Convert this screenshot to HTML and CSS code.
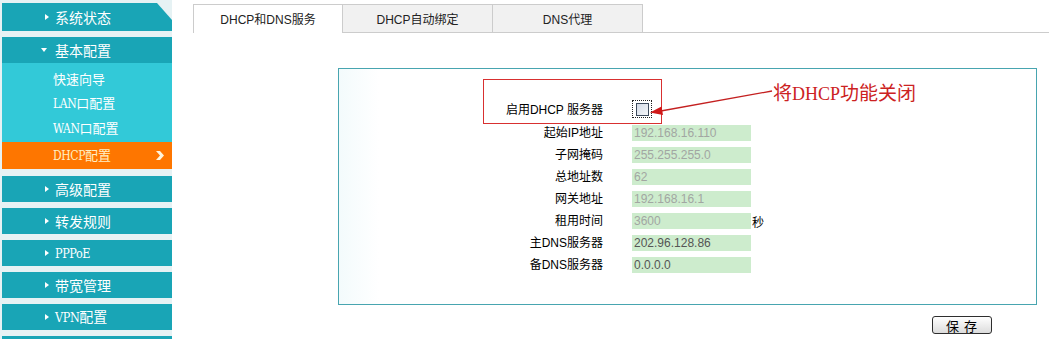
FILE: index.html
```html
<!DOCTYPE html>
<html lang="zh-CN">
<head>
<meta charset="utf-8">
<title>DHCP配置</title>
<link rel="stylesheet" href="styles.css">
</head>
<body>
<div class="page">
  <nav class="sidebar">
    <div class="nav-item first"><span class="tri-r"></span><span class="txt">系统状态</span></div>
    <div class="nav-item open"><span class="tri-d"></span><span class="txt">基本配置</span></div>
    <div class="submenu">
      <div class="sub-item"><span class="txt">快速向导</span></div>
      <div class="sub-item"><span class="txt"><span class="lat">LAN</span>口配置</span></div>
      <div class="sub-item"><span class="txt"><span class="lat">WAN</span>口配置</span></div>
    </div>
    <div class="sub-item active"><span class="txt"><span class="lat">DHCP</span>配置</span>
      <svg class="chev" width="11" height="11" viewBox="0 0 11 11"><path d="M2 1 L6 1 L10 5.5 L6 10 L2 10 L6 5.5 Z" fill="#fff4dc"/></svg>
    </div>
    <div class="nav-item gap7"><span class="tri-r"></span><span class="txt">高级配置</span></div>
    <div class="nav-item"><span class="tri-r"></span><span class="txt">转发规则</span></div>
    <div class="nav-item"><span class="tri-r"></span><span class="txt"><span class="lat big">PPPoE</span></span></div>
    <div class="nav-item"><span class="tri-r"></span><span class="txt">带宽管理</span></div>
    <div class="nav-item"><span class="tri-r"></span><span class="txt"><span class="lat big">VPN</span>配置</span></div>
    <div class="nav-item"></div>
  </nav>

  <main class="main">
    <div class="tabbar">
      <div class="tab active">DHCP和DNS服务</div>
      <div class="tab">DHCP自动绑定</div>
      <div class="tab">DNS代理</div>
      <div class="tab-fill"></div>
    </div>

    <section class="panel">
      <div class="note-box"></div>
      <div class="row enable">
        <label class="lbl">启用DHCP 服务器</label>
        <span class="focus"><span class="check"></span></span>
      </div>
      <div class="row"><label class="lbl">起始IP地址</label><span class="field dis">192.168.16.110</span></div>
      <div class="row"><label class="lbl">子网掩码</label><span class="field dis">255.255.255.0</span></div>
      <div class="row"><label class="lbl">总地址数</label><span class="field dis">62</span></div>
      <div class="row"><label class="lbl">网关地址</label><span class="field dis">192.168.16.1</span></div>
      <div class="row"><label class="lbl">租用时间</label><span class="field dis">3600</span><span class="unit">秒</span></div>
      <div class="row"><label class="lbl">主DNS服务器</label><span class="field">202.96.128.86</span></div>
      <div class="row"><label class="lbl">备DNS服务器</label><span class="field">0.0.0.0</span></div>
    </section>

    <div class="actions"><button class="btn">保 存</button></div>
  </main>

  <svg class="arrow" width="140" height="60" viewBox="0 0 140 60">
    <line x1="132" y1="21" x2="18" y2="41.5" stroke="#c42020" stroke-width="1.3"/>
    <polygon points="10,42.5 21.5,36.5 23,45" fill="#d01818"/>
  </svg>
  <div class="note-text">将<span class="serif">DHCP</span>功能关闭</div>
</div>
</body>
</html>
```

FILE: styles.css
```css
html, body {
  margin: 0;
  padding: 0;
  height: 339px;
  overflow: hidden;
  background: #ffffff;
}

.page {
  position: relative;
  display: flex;
  width: 1049px;
  height: 339px;
  overflow: hidden;
  font-family: "Liberation Sans", "Noto Sans CJK SC", sans-serif;
}

/* ---------- sidebar ---------- */
.sidebar {
  width: 172px;
  flex: none;
  background: #e6f2f4;
  padding-top: 3px;
  display: flex;
  flex-direction: column;
}

.txt {
  white-space: nowrap;
}

.nav-item {
  margin-left: 2px;
  height: 26px;
  margin-bottom: 6px;
  background: #19a5b6;
  color: #ffffff;
  font-size: 14px;
  line-height: 26px;
  display: flex;
  align-items: center;
  padding-left: 41px;
  box-sizing: border-box;
  font-family: "Noto Sans CJK SC", sans-serif;
  flex: none;
}

.nav-item.first {
  height: 28px;
  clip-path: polygon(0 0, 155px 0, 170px 17px, 170px 100%, 0 100%);
}

.nav-item.open {
  margin-bottom: 0;
  padding-left: 37px;
}

.nav-item.gap7 {
  margin-top: 7px;
}

.tri-r {
  width: 0;
  height: 0;
  border-top: 3px solid transparent;
  border-bottom: 3px solid transparent;
  border-left: 4px solid #ffffff;
  margin-right: 6px;
  margin-left: 2px;
}

.tri-d {
  width: 0;
  height: 0;
  border-left: 3.5px solid transparent;
  border-right: 3.5px solid transparent;
  border-top: 4px solid #ffffff;
  margin-right: 8px;
  margin-left: 2px;
}

.submenu {
  margin-left: 2px;
  background: #32c9d8;
  padding-top: 3px;
  padding-bottom: 1px;
}

.sub-item {
  height: 25px;
  line-height: 25px;
  padding-left: 51px;
  color: #ffffff;
  font-size: 13px;
  font-family: "Noto Sans CJK SC", sans-serif;
  display: flex;
  align-items: center;
}

.sub-item.active {
  margin-left: 2px;
  height: 27px;
  background: #fe7600;
  color: #fff0c4;
  position: relative;
}

.chev {
  position: absolute;
  left: 152px;
  top: 8px;
}

.lat {
  font-family: "DejaVu Serif", serif;
  font-stretch: condensed;
  font-size: 12px;
  letter-spacing: -0.4px;
}

.lat.big {
  font-size: 12.5px;
}

/* ---------- main ---------- */
.main {
  flex: 1;
  display: flex;
  flex-direction: column;
}

.tabbar {
  display: flex;
  margin-top: 4px;
  margin-left: 21px;
  height: 29px;
}

.tab {
  box-sizing: border-box;
  width: 150px;
  height: 29px;
  border: 1px solid #cccccc;
  border-left: none;
  background: #f1f1f1;
  color: #222222;
  font-size: 12px;
  text-align: center;
  padding-top: 8px;
  line-height: 14px;
}

.tab.active {
  width: 150px;
  border-left: 1px solid #cccccc;
  border-bottom: none;
  background: #ffffff;
}

.tab-fill {
  flex: 1;
  border-bottom: 1px solid #cccccc;
}

.panel {
  position: relative;
  box-sizing: border-box;
  margin-top: 35px;
  margin-left: 166px;
  width: 699px;
  height: 237px;
  border: 1px solid #48a5b0;
  background: linear-gradient(90deg, #f3fbfc 0, #ffffff 40px);
  padding-top: 31px;
  display: flex;
  flex-direction: column;
  gap: 6px;
}

.row {
  display: flex;
  align-items: center;
  height: 16px;
  font-size: 12px;
}

.row.enable {
  height: 18px;
  margin-bottom: 1px;
}

.lbl {
  width: 264px;
  text-align: right;
  margin-right: 29px;
  color: #000000;
  line-height: 16px;
}

.row.enable .lbl {
  margin-top: 1px;
}

.focus {
  box-sizing: border-box;
  width: 20px;
  height: 18px;
  border: 1px dotted #222222;
  display: flex;
  align-items: center;
  justify-content: center;
}

.check {
  box-sizing: border-box;
  width: 13px;
  height: 13px;
  border: 1px solid #3c4a5c;
  background: linear-gradient(135deg, #d4dbe6 0, #f4f6f9 100%);
}

.field {
  box-sizing: border-box;
  width: 119px;
  height: 16px;
  background: #cdeccd;
  color: #555555;
  padding-left: 2px;
  line-height: 16px;
  font-size: 12px;
}

.field.dis {
  color: #a2a6a2;
}

.unit {
  margin-left: 1px;
  color: #000000;
}

.note-box {
  position: absolute;
  left: 144px;
  top: 10px;
  width: 179px;
  height: 45px;
  box-sizing: border-box;
  border: 1px solid #d83030;
}

.actions {
  margin-top: 11px;
  margin-left: 760px;
}

.btn {
  box-sizing: border-box;
  width: 60px;
  height: 18px;
  padding: 0;
  border: 1px solid #2e2e2e;
  border-radius: 3px;
  background: linear-gradient(#ffffff, #dcdcdc);
  font-family: "Noto Sans CJK SC", sans-serif;
  font-size: 13px;
  line-height: 15px;
  letter-spacing: 1px;
  color: #000000;
}

/* ---------- annotation ---------- */
.arrow {
  position: absolute;
  left: 640px;
  top: 70px;
}

.note-text {
  position: absolute;
  left: 773px;
  top: 81px;
  font-family: "Noto Sans CJK SC", sans-serif;
  font-size: 19px;
  line-height: 22px;
  color: #cc2222;
  white-space: nowrap;
}

.serif {
  font-family: "Liberation Serif", serif;
  font-size: 18px;
}
```
